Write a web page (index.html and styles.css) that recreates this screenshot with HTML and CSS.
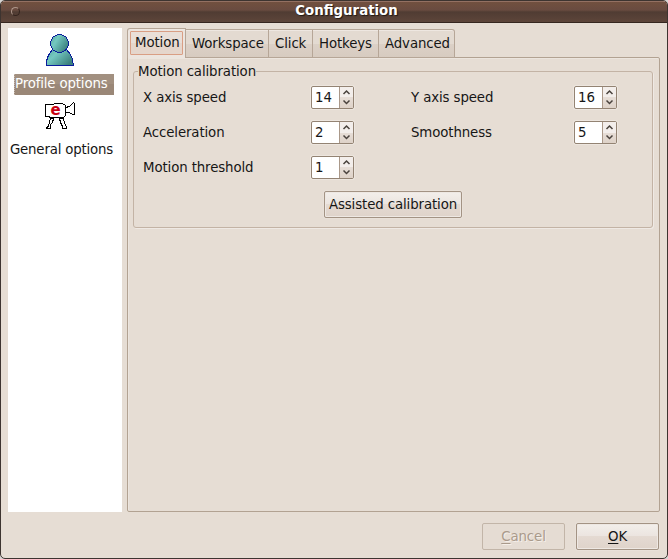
FILE: index.html
```html
<!DOCTYPE html>
<html lang="en">
<head>
<meta charset="utf-8">
<title>Configuration</title>
<link rel="stylesheet" href="styles.css">
</head>
<body>
<svg class="defs" width="0" height="0"><defs>
<symbol id="arrows" viewBox="0 0 13 21"><path d="M3.500 7 6.500 4 9.500 7M3.500 13.500 6.500 16.500 9.500 13.500" fill="none" stroke="#49423d" stroke-width="1.500"/></symbol>
</defs></svg>
<div class="window">
  <header class="titlebar"><i class="menu-dot"></i><h1>Configuration</h1></header>
  <div class="content">
    <nav class="sidebar">
      <svg class="person" width="30" height="33" viewBox="0 0 30 33">
        <defs><linearGradient id="teal" x1="0" x2="1" y2=".6"><stop offset="0" stop-color="#58a69e"/><stop offset=".38" stop-color="#74c8c0"/><stop offset="1" stop-color="#3c817e"/></linearGradient></defs>
        <path d="M1.5 31.5V27.5L2.5 23.5 4.5 19.5 7.5 15.5H21.5L25.5 20.5 27.5 25.5 28.5 31.5Z" fill="url(#teal)" stroke="#0a1d9c" shape-rendering="crispEdges"/>
        <circle cx="14.5" cy="9.5" r="9" fill="url(#teal)" stroke="#0a1d9c" shape-rendering="crispEdges"/>
      </svg>
      <span class="item selected">Profile options</span>
      <svg class="camera" width="32" height="30" viewBox="0 0 32 30">
        <g fill="#fff" stroke="#000" shape-rendering="crispEdges">
          <path d="M5.500 16.500H8.500L7.500 20.500 5.500 22.500V26.500H1.500V25.500L3.500 24.500 4.500 19.500ZM14.500 16.500H18.500L19.500 21.500 21.500 24.500V26.500H17.500V24.500L15.500 20.500Z"/>
          <path d="M.5 2.500 17.500 1.500 20.500 3.500V13.500L18.500 15.500H4.500V14.500H.5Z"/>
          <path d="M20.500 5.500 24.500 4.500 28.500 .5 29.500 1.500V12.500H27.500L24.500 10.500H20.500Z"/>
        </g>
        <text x="5.500" y="13" class="logo-e">e</text>
      </svg>
      <span class="item general">General options</span>
    </nav>
    <main class="notebook">
      <div class="tabs">
        <div class="tab active"><span>Motion</span></div>
        <div class="tab workspace"><span>Workspace</span></div>
        <div class="tab click"><span>Click</span></div>
        <div class="tab hotkeys"><span>Hotkeys</span></div>
        <div class="tab advanced"><span>Advanced</span></div>
      </div>
      <section class="page">
        <fieldset>
          <legend>Motion calibration</legend>
          <div class="settings">
            <label>X axis speed</label><div class="spin"><span>14</span><svg><use href="#arrows"/></svg></div>
            <label>Y axis speed</label><div class="spin"><span>16</span><svg><use href="#arrows"/></svg></div>
            <label>Acceleration</label><div class="spin"><span>2</span><svg><use href="#arrows"/></svg></div>
            <label>Smoothness</label><div class="spin"><span>5</span><svg><use href="#arrows"/></svg></div>
            <label>Motion threshold</label><div class="spin"><span>1</span><svg><use href="#arrows"/></svg></div>
          </div>
          <button class="assist">Assisted calibration</button>
        </fieldset>
      </section>
    </main>
  </div>
  <footer><button class="disabled"><u>C</u>ancel</button><button><u>O</u>K</button></footer>
</div>
</body>
</html>
```

FILE: styles.css
```css
* { box-sizing: border-box; }
body { margin: 0; width: 668px; height: 559px; overflow: hidden; background: #d8d5d3; color: #161616; font: 13.33px/16px "DejaVu Sans", sans-serif; letter-spacing: -0.11px; }
.defs { display: none; }
.window { height: 559px; border: 1px solid #3d3430; border-radius: 5px; background: #e6ddd4; display: flex; flex-direction: column; overflow: hidden; }
.titlebar { height: 22px; flex: none; display: flex; align-items: center; border-top: 1px solid #937062; border-bottom: 1px solid #35261f; background: linear-gradient(#71503f 0, #694b40 40%, #503c33 50%, #5d453a 100%); }
.menu-dot { width: 9px; height: 9px; margin: 0 0 2px 10px; border: 1px solid; border-color: #ae978b #34241e #34241e #ae978b; border-radius: 50%; }
h1 { flex: 1; margin: 0 0 3px 6px; text-align: center; color: #fff; font-size: 13.33px; line-height: 18px; text-shadow: 1px 1px 1px #211712; letter-spacing: 0; }
.content { display: flex; height: 484px; margin: 5px 7px 0; gap: 5px; }
.sidebar { width: 114px; background: #fff; display: flex; flex-direction: column; align-items: center; }
.person { margin: 6px 0 0 -10px; flex: none; }
.item { height: 21px; white-space: nowrap; line-height: 20px; }
.selected { width: 100px; margin: 7px 0 0 -2px; padding-left: 0; color: #fff; background: linear-gradient(#a29080 0 50%, #9a8777 50%); border-left: 1px dotted #c6b9ae; letter-spacing: -0.15px; }
.camera { margin: 7px 0 0 -8px; flex: none; width: 32px; height: 30px; }
.logo-e { font: bold 15px "DejaVu Sans", sans-serif; fill: #c80012; }
.general { margin: 8px 0 0 -7px; letter-spacing: -0.18px; }
.notebook { width: 533px; display: flex; flex-direction: column; }
.tabs { display: flex; height: 30px; align-items: flex-end; position: relative; z-index: 1; }
.tab { height: 29px; padding: 6px 0 0 6px; border: 1px solid #b6a697; border-left: 0; background: linear-gradient(#e3dad1 0 50%, #dcd1c7 50%, #d7cbc0); white-space: nowrap; box-shadow: inset 0 1px #eee7e1; }
.active { width: 59px; height: 30px; padding: 2px; border-left: 1px solid #b6a697; border-bottom: 0; border-radius: 3px 0 0; background: #ece5df; }
.active span { display: block; height: 24px; width: 53px; padding: 3px 0 0 4px; border: 1px solid #d99e84; border-radius: 1px; background: linear-gradient(#e9dfd8 0 50%, #e5d6cc 50%); }
.workspace { width: 83px; } .click { width: 44px; } .hotkeys { width: 66px; } .advanced { width: 76px; border-radius: 0 3px 0 0; }
.page { flex: 1; margin-top: -1px; padding: 5px 6px 0 5px; border: 1px solid #b2a292; border-radius: 0 2px 2px; box-shadow: inset 1px 1px #ece5de; }
fieldset { height: 165px; margin: 0; padding: 6px 9px 0; border: 1px solid #c3b3a5; border-radius: 3px; box-shadow: 1px 1px #efe9e4; }
legend { padding: 0; margin-left: -5px; height: 17px; line-height: 17px; }
.settings { display: grid; grid-template-columns: 168px 100px 163px 44px; grid-auto-rows: 24px; row-gap: 11px; align-items: center; }
.spin { display: flex; align-self: start; width: 43px; height: 23px; border: 1px solid #938373; border-radius: 2px; background: #fff; box-shadow: 0 0 0 1px #ede6df; }
.spin span { width: 28px; padding: 3px 0 0 3px; border-right: 1px solid #aa9889; letter-spacing: 0; }
.spin svg { width: 13px; height: 21px; background: linear-gradient(#f3eeeb 0 50%, #e7ded7 50%, #ded2c8); }
button { height: 27px; padding: 0; color: inherit; font: inherit; letter-spacing: inherit; border: 1px solid #a39384; border-radius: 2px; background: linear-gradient(#f3efeb, #ebe4df 50%, #e4dad2 50%, #dfd3ca); box-shadow: inset 0 0 0 1px #eee8e3, 0 0 0 1px #e9e1d9; }
.assist { display: block; width: 138px; margin: 11px 0 0 181px; }
footer { display: flex; justify-content: flex-end; gap: 11px; margin: 11px 8px 0; }
footer button { width: 83px; }
footer .disabled { color: #a99a8b; border-color: #c2b5a8; background: #e5dcd3; text-shadow: 1px 1px #f5efe9; box-shadow: none; }
u { text-underline-offset: 2px; }
```
